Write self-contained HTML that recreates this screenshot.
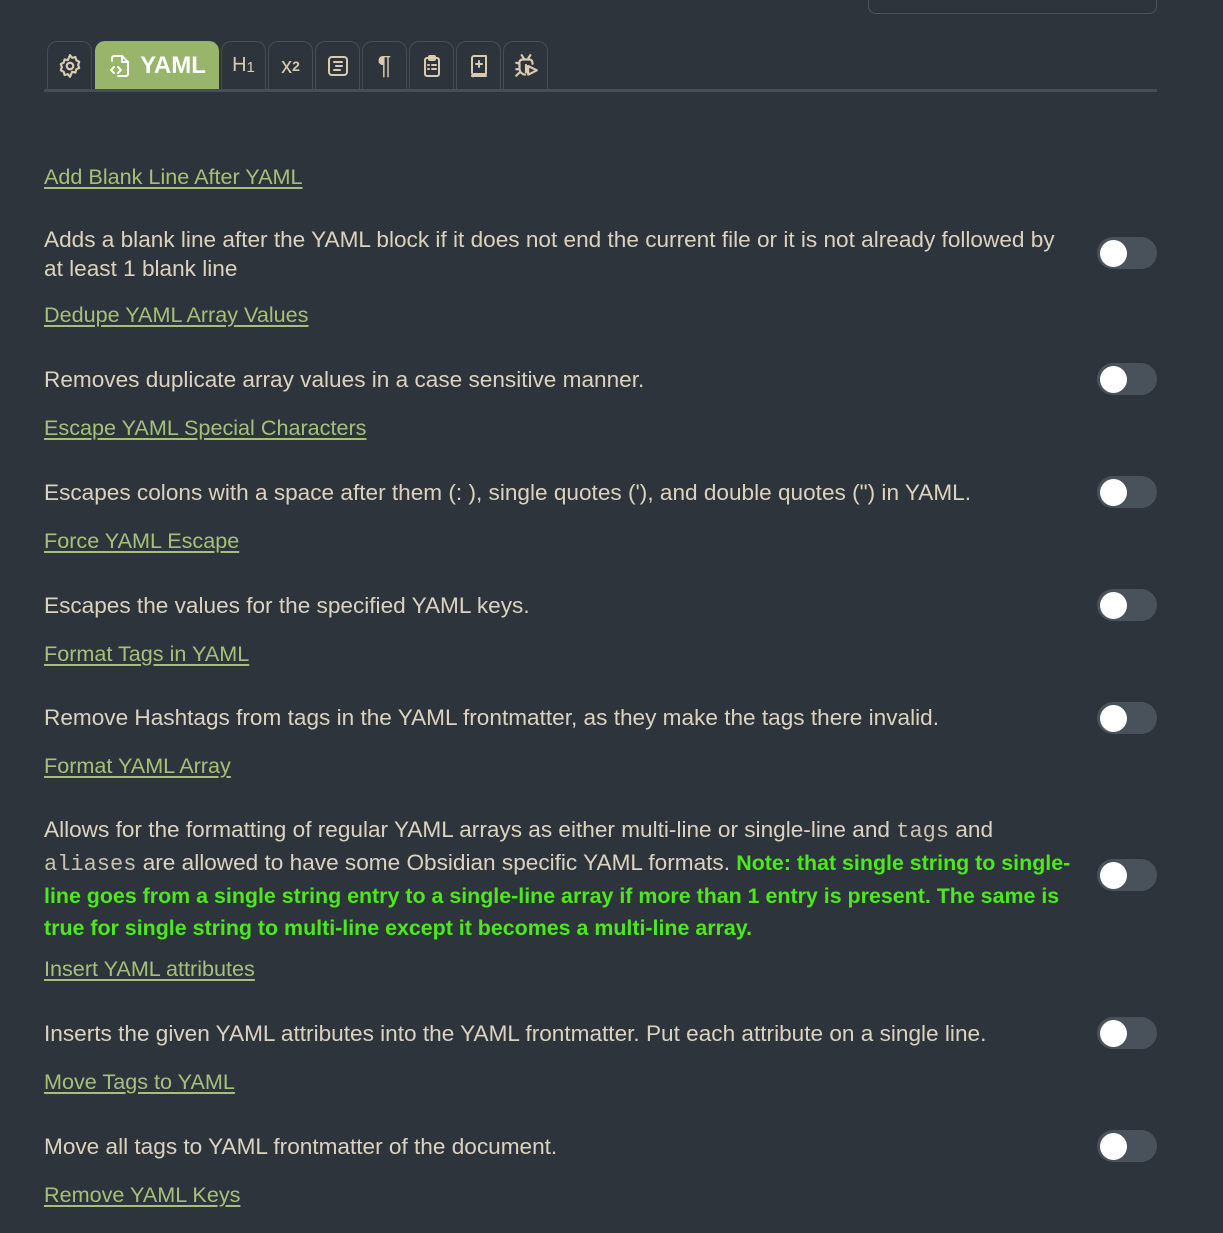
<!DOCTYPE html>
<html><head><meta charset="utf-8"><style>
body{margin:0;width:1223px;height:1233px;background:#2e343c;overflow:hidden;font-family:"Liberation Sans",sans-serif;color:#dcd3bf;position:relative}
.a{position:absolute;left:44px;white-space:nowrap;font-size:22.6px;line-height:29px;margin-top:0px}
.l{color:#a6c07a;text-decoration:underline;text-underline-offset:3px;font-size:21.6px}
.g{color:#4ce81c;font-weight:bold;font-size:21.4px}
code{font-family:"Liberation Mono",monospace;font-size:22px;color:#c9c2b0}
.t{position:absolute;left:1097px;width:60px;height:32px;border-radius:16px;background:#49515a}
.t:after{content:"";position:absolute;left:3px;top:2.5px;width:27px;height:27px;border-radius:50%;background:#fff}
.tab{position:absolute;top:41px;height:48px;width:45px;border:1px solid #454e56;border-bottom:none;border-radius:10px 10px 0 0;box-sizing:border-box;display:flex;align-items:center;justify-content:center;color:#d8cbb0}
svg{stroke:#d8cbb0;fill:none;stroke-width:2;stroke-linecap:round;stroke-linejoin:round}
</style></head><body>
<div style="position:absolute;left:868px;top:-20px;width:289px;height:34px;border:1px solid #4a525a;border-radius:8px;box-sizing:border-box"></div>
<div style="position:absolute;left:44px;top:89px;width:1113px;height:3px;background:#454e56"></div>
<div class="tab" style="left:47px"><svg width="26" height="26" viewBox="0 0 24 24"><circle cx="12" cy="12" r="3"/><path d="M12 2l2 2.5 3-.8.8 3 2.7 1.3-1 2.9 1 2.9-2.7 1.3-.8 3-3-.8L12 22l-2-2.5-3 .8-.8-3-2.7-1.3 1-2.9-1-2.9 2.7-1.3.8-3 3 .8z"/></svg></div>
<div class="tab" style="left:95px;width:124px;background:#98b56b;border-color:#98b56b;color:#fff;font-weight:bold;font-size:24px"><svg width="24" height="26" viewBox="0 0 24 24" style="stroke:#fff;margin-right:8px"><path d="M14 2H6a2 2 0 0 0-2 2v3M14 2v6h6M14 2l6 6v12a2 2 0 0 1-2 2H10"/><path d="M6 13l-3 3 3 3M10 13l3 3-3 3"/></svg>YAML</div>
<div class="tab" style="left:221px;font-size:20px">H<span style="font-size:15px;margin-top:4px">1</span></div>
<div class="tab" style="left:268px;font-size:22px">x<sup style="font-size:14px;font-weight:bold">2</sup></div>
<div class="tab" style="left:315px"><svg width="24" height="24" viewBox="0 0 24 24"><rect x="3" y="3" width="18" height="18" rx="3"/><path d="M8 8h8M10 12h6M8 16h6"/></svg></div>
<div class="tab" style="left:362px;font-size:26px">¶</div>
<div class="tab" style="left:409px"><svg width="24" height="26" viewBox="0 0 24 24"><rect x="5" y="4" width="14" height="18" rx="2"/><rect x="9" y="2" width="6" height="4" rx="1"/><path d="M8 11h1M12 11h4M8 15h1M12 15h4"/></svg></div>
<div class="tab" style="left:456px"><svg width="24" height="26" viewBox="0 0 24 24"><path d="M5 19V4a2 2 0 0 1 2-2h12v18H7a2 2 0 0 0-2 2 2 2 0 0 0 2 0h12"/><path d="M12 7v6M9 10h6"/></svg></div>
<div class="tab" style="left:503px"><svg width="26" height="26" viewBox="0 0 24 24"><path d="M8 2l2 3M16 2l-2 3M9 6h6a3 3 0 0 1 3 3v1M6 10a3 3 0 0 1 3-4M6 10v5a6 6 0 0 0 5 5M3 9l3 1M3 15h3M3 21l3-3M12 11v7M14 12l8 4-8 4z"/></svg></div>

<div class="a l" style="top:162px">Add Blank Line After YAML</div>
<div class="a" style="top:225px">Adds a blank line after the YAML block if it does not end the current file or it is not already followed by<br>at least 1 blank line</div>
<div class="t" style="top:237px"></div>
<div class="a l" style="top:300px">Dedupe YAML Array Values</div>
<div class="a" style="top:365px">Removes duplicate array values in a case sensitive manner.</div>
<div class="t" style="top:363px"></div>
<div class="a l" style="top:413px">Escape YAML Special Characters</div>
<div class="a" style="top:478px">Escapes colons with a space after them (: ), single quotes ('), and double quotes (") in YAML.</div>
<div class="t" style="top:476px"></div>
<div class="a l" style="top:526px">Force YAML Escape</div>
<div class="a" style="top:591px">Escapes the values for the specified YAML keys.</div>
<div class="t" style="top:589px"></div>
<div class="a l" style="top:639px">Format Tags in YAML</div>
<div class="a" style="top:703px">Remove Hashtags from tags in the YAML frontmatter, as they make the tags there invalid.</div>
<div class="t" style="top:702px"></div>
<div class="a l" style="top:751px">Format YAML Array</div>
<div class="a" style="top:814px;line-height:31px">Allows for the formatting of regular YAML arrays as either multi-line or single-line and <code>tags</code> and<br><code>aliases</code> are allowed to have some Obsidian specific YAML formats. <span class="g">Note: that single string to single-</span><br><span class="g">line goes from a single string entry to a single-line array if more than 1 entry is present. The same is</span><br><span class="g">true for single string to multi-line except it becomes a multi-line array.</span></div>
<div class="t" style="top:859px"></div>
<div class="a l" style="top:954px">Insert YAML attributes</div>
<div class="a" style="top:1019px">Inserts the given YAML attributes into the YAML frontmatter. Put each attribute on a single line.</div>
<div class="t" style="top:1017px"></div>
<div class="a l" style="top:1067px">Move Tags to YAML</div>
<div class="a" style="top:1132px">Move all tags to YAML frontmatter of the document.</div>
<div class="t" style="top:1130px"></div>
<div class="a l" style="top:1180px">Remove YAML Keys</div>
</body></html>
